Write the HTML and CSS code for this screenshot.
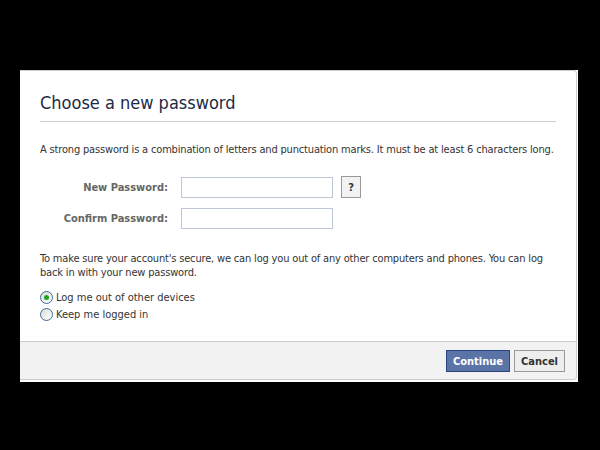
FILE: index.html
```html
<!DOCTYPE html>
<html lang="en">
<head>
    <meta charset="UTF-8">
    <title>Choose a new password</title>
    <link rel="stylesheet" href="styles.css">
</head>
<body>
    <div class="dialog">
        <div class="dialog-body">
            <h2 class="dialog-title">Choose a new password</h2>
            <p class="intro">A strong password is a combination of letters and punctuation marks. It must be at least 6 characters long.</p>

            <div class="fields">
                <label for="new-password">New Password:</label>
                <input type="password" id="new-password">
                <button class="help-button" type="button">?</button>

                <label for="confirm-password">Confirm Password:</label>
                <input type="password" id="confirm-password">
            </div>

            <p class="note">To make sure your account's secure, we can log you out of any other computers and phones. You can log back in with your new password.</p>

            <div class="options">
                <label class="option"><span class="radio checked"></span>Log me out of other devices</label>
                <label class="option"><span class="radio"></span>Keep me logged in</label>
            </div>
        </div>

        <div class="dialog-footer">
            <button class="btn btn-primary" type="button">Continue</button>
            <button class="btn" type="button">Cancel</button>
        </div>
    </div>
</body>
</html>
```

FILE: styles.css
```css
body {
    margin: 0;
    padding: 0;
    background-color: #000;
    font-family: Tahoma, "DejaVu Sans Condensed", "DejaVu Sans", sans-serif;
    font-size: 11px;
    color: #333;
}

.dialog {
    margin: 70px 0 0 20px;
    width: 558px;
    background-color: white;
    padding: 0 1px 2px 0;
    box-sizing: border-box;
}

.dialog-body {
    border-top: 1px solid #ccc;
    border-right: 1px solid #ccc;
    border-top-right-radius: 4px;
    padding: 22px 20px 18px 20px;
}

.dialog-title {
    margin: 0;
    padding-bottom: 8px;
    border-bottom: 1px solid #ccc;
    font-size: 18px;
    line-height: 20px;
    font-weight: normal;
    color: #1c2a47;
}

.intro,
.note {
    line-height: 14px;
    letter-spacing: -0.17px;
}

.intro {
    margin: 21px 0 0 0;
}

.fields {
    display: grid;
    grid-template-columns: 128px 152px 20px;
    column-gap: 13px;
    row-gap: 10px;
    align-items: center;
    margin-top: 19px;
}

.fields label {
    text-align: right;
    font-weight: bold;
    color: #666;
}

.fields input {
    height: 21px;
    width: 152px;
    box-sizing: border-box;
    border: 1px solid #bdc7d8;
    padding: 2px 3px;
    margin: 0;
}

.help-button {
    width: 20px;
    height: 22px;
    margin-left: -5px;
    padding: 0;
    border: 1px solid #999;
    background-color: #f2f2f2;
    color: #333;
    font-family: inherit;
    font-size: 11px;
    font-weight: bold;
}

.note {
    margin: 23px 0 0 0;
}

.options {
    margin-top: 9px;
}

.option {
    display: flex;
    align-items: center;
    height: 17px;
}

.radio {
    width: 11px;
    height: 11px;
    margin-right: 3px;
    border: 1px solid #3e6a9a;
    border-radius: 50%;
    background: linear-gradient(135deg, #dcdcd6, #fff);
    position: relative;
}

.radio.checked::after {
    content: "";
    position: absolute;
    left: 3px;
    top: 3px;
    width: 5px;
    height: 5px;
    border-radius: 50%;
    background-color: #21a121;
}

.dialog-footer {
    display: flex;
    justify-content: flex-end;
    gap: 4px;
    padding: 8px 11px 7px 0;
    background-color: #f2f2f2;
    border-top: 1px solid #ccc;
    border-bottom: 1px solid #ccc;
    border-right: 1px solid #ccc;
    border-bottom-right-radius: 4px;
}

.btn {
    height: 22px;
    padding: 0 6px;
    border: 1px solid #999;
    background-color: #eee;
    color: #333;
    font-family: inherit;
    font-size: 11px;
    font-weight: bold;
}

.btn-primary {
    background-color: #5b74a8;
    border-color: #29447e;
    color: white;
}
```
